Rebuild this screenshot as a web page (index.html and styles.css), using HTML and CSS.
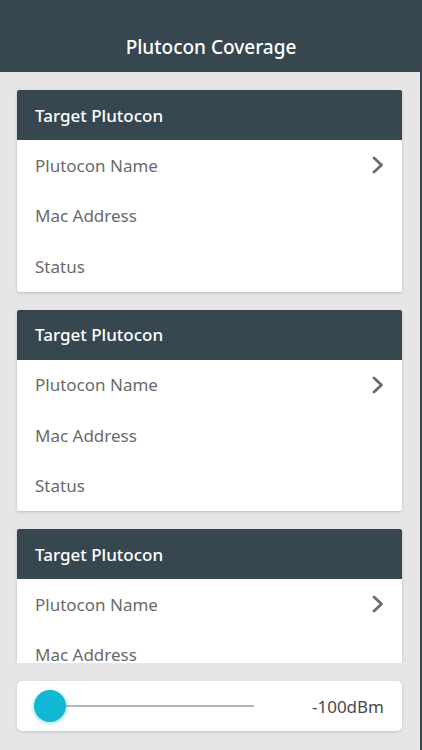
FILE: index.html
```html
<!DOCTYPE html>
<html>
<head>
<meta charset="utf-8">
<link rel="stylesheet" href="styles.css">
</head>
<body>
<div class="app">
  <header class="topbar"><h1 class="title">Plutocon Coverage</h1></header>
  <main class="content">
    <div class="list">
      <section class="card">
        <div class="card-head">Target Plutocon</div>
        <div class="row"><span>Plutocon Name</span><svg class="chev" viewBox="0 0 14 20" width="14" height="20"><path d="M3 3 L10.5 10 L3 17" fill="none" stroke="#6b6b6b" stroke-width="2.8" stroke-linecap="round" stroke-linejoin="round"/></svg></div>
        <div class="row"><span>Mac Address</span></div>
        <div class="row"><span>Status</span></div>
      </section>
      <section class="card">
        <div class="card-head">Target Plutocon</div>
        <div class="row"><span>Plutocon Name</span><svg class="chev" viewBox="0 0 14 20" width="14" height="20"><path d="M3 3 L10.5 10 L3 17" fill="none" stroke="#6b6b6b" stroke-width="2.8" stroke-linecap="round" stroke-linejoin="round"/></svg></div>
        <div class="row"><span>Mac Address</span></div>
        <div class="row"><span>Status</span></div>
      </section>
      <section class="card">
        <div class="card-head">Target Plutocon</div>
        <div class="row"><span>Plutocon Name</span><svg class="chev" viewBox="0 0 14 20" width="14" height="20"><path d="M3 3 L10.5 10 L3 17" fill="none" stroke="#6b6b6b" stroke-width="2.8" stroke-linecap="round" stroke-linejoin="round"/></svg></div>
        <div class="row"><span>Mac Address</span></div>
        <div class="row"><span>Status</span></div>
      </section>
    </div>
    <div class="footer">
      <div class="slider-card">
        <div class="slider">
          <div class="track"></div>
          <div class="thumb"></div>
        </div>
        <span class="value">-100dBm</span>
      </div>
    </div>
  </main>
</div>
</body>
</html>
```

FILE: styles.css
```css
* { box-sizing: border-box; }
html, body { margin: 0; padding: 0; }
body {
  width: 422px;
  height: 750px;
  overflow: hidden;
  font-family: "Noto Sans", "Open Sans", sans-serif;
  background: #36474f;
}
.app {
  display: flex;
  flex-direction: column;
  height: 750px;
}
.topbar {
  height: 72px;
  background: #36474f;
  display: flex;
  align-items: flex-end;
  justify-content: center;
  padding-bottom: 12px;
  flex: none;
}
.title {
  margin: 0;
  color: #ffffff;
  font-size: 19px;
  font-weight: 500;
  line-height: 26px;
}
.content {
  flex: 1;
  margin-right: 2px;
  background: #e6e6e6;
  display: flex;
  flex-direction: column;
  min-height: 0;
}
.list {
  height: 591px;
  overflow: hidden;
  padding: 18px 18px 0 17px;
  display: flex;
  flex-direction: column;
  gap: 18px;
}
.card {
  background: #ffffff;
  border-radius: 2px;
  box-shadow: 0 1px 3px rgba(0,0,0,0.18);
  flex: none;
}
.card-head {
  height: 50px;
  background: #36474f;
  color: #ffffff;
  font-size: 17px;
  font-weight: 500;
  display: flex;
  align-items: center;
  padding-left: 18px;
  border-radius: 2px 2px 0 0;
}
.row {
  height: 50.5px;
  display: flex;
  align-items: center;
  justify-content: space-between;
  padding: 0 17px 0 18px;
  color: #6a6a6a;
  font-size: 17px;
}
.chev { display: block; }
.footer {
  flex: 1;
  padding: 18px 18px 0 17px;
}
.slider-card {
  height: 50px;
  background: #ffffff;
  border-radius: 5px;
  box-shadow: 0 1px 3px rgba(0,0,0,0.15);
  display: flex;
  align-items: center;
  justify-content: space-between;
  padding: 0 18px 0 17px;
}
.slider {
  position: relative;
  width: 220px;
  height: 34px;
}
.track {
  position: absolute;
  left: 16px;
  right: 0;
  top: 16px;
  height: 2px;
  background: #b5b5b5;
}
.thumb {
  position: absolute;
  left: 0;
  top: 1px;
  width: 32px;
  height: 32px;
  border-radius: 50%;
  background: #12b7d3;
  box-shadow: 0 1px 4px rgba(18,183,211,0.5);
}
.value {
  color: #4a4a4a;
  font-size: 17px;
}
```
